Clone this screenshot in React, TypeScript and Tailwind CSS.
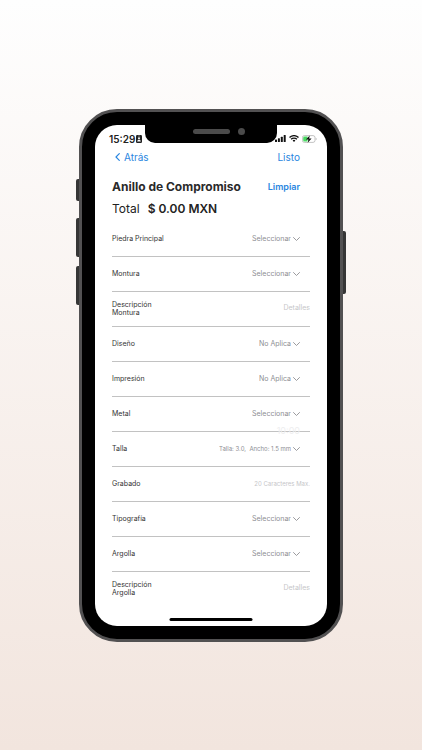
import React from "react";

type Field = {
  id: string;
  label: string[];
  kind: "select" | "text";
  value: string;
  small?: boolean;
};

const fields: Field[] = [
  { id: "piedra", label: ["Piedra Principal"], kind: "select", value: "Seleccionar" },
  { id: "montura", label: ["Montura"], kind: "select", value: "Seleccionar" },
  { id: "desc-montura", label: ["Descripción", "Montura"], kind: "text", value: "Detalles" },
  { id: "diseno", label: ["Diseño"], kind: "select", value: "No Aplica" },
  { id: "impresion", label: ["Impresión"], kind: "select", value: "No Aplica" },
  { id: "metal", label: ["Metal"], kind: "select", value: "Seleccionar" },
  { id: "talla", label: ["Talla"], kind: "select", value: "Talla: 3.0,\u00a0 Ancho: 1.5 mm", small: true },
  { id: "grabado", label: ["Grabado"], kind: "text", value: "20 Caracteres Max.", small: true },
  { id: "tipografia", label: ["Tipografía"], kind: "select", value: "Seleccionar" },
  { id: "argolla", label: ["Argolla"], kind: "select", value: "Seleccionar" },
  { id: "desc-argolla", label: ["Descripción", "Argolla"], kind: "text", value: "Detalles" },
];

function Row({ field }: { field: Field }) {
  const size = field.small ? "text-[6px]" : "text-[7px]";
  return (
    <div className="relative flex h-[35px] items-center justify-between border-b border-[#c2c2c2] last:border-transparent">
      <label htmlFor={field.id} className="shrink-0 text-[7px] leading-[8px] text-[#333]">
        {field.label.map((line) => (
          <span key={line} className="block">{line}</span>
        ))}
      </label>
      {field.kind === "select" ? (
        <div className="flex items-center gap-[2px] pr-[10px]">
          <select
            id={field.id}
            className={`${size} field-sizing-content h-[10px] appearance-none bg-transparent p-0 text-right leading-[10px] text-[#8e8e93] outline-none`}
          >
            <option>{field.value}</option>
          </select>
          <svg className="h-[4px] w-[7px]" viewBox="0 0 7 4" fill="none" stroke="#8e8e93" strokeWidth="0.9" strokeLinecap="round" strokeLinejoin="round" aria-hidden="true">
            <path d="M.5.5 3.5 3.5 6.5.5" />
          </svg>
        </div>
      ) : (
        <input
          id={field.id}
          placeholder={field.value}
          className={`${size} w-24 bg-transparent p-0 text-right outline-none placeholder:text-[#c6c6c9]`}
        />
      )}
      {field.id === "metal" && (
        <span className="absolute right-[10px] -bottom-[5px] text-[9px] leading-[10px] text-[#eeeeef]">10:00</span>
      )}
    </div>
  );
}

function StatusBar() {
  return (
    <div className="flex h-[21px] items-end justify-between pr-[10px] pl-[14px]">
      <div className="flex items-center gap-[1px]">
        <span className="text-[10px] leading-[14px] font-semibold text-[#222]">15:29</span>
        <svg className="h-[8px] w-[6px]" viewBox="0 0 6 8" aria-hidden="true">
          <rect width="6" height="8" rx="1.2" fill="#222" />
          <circle cx="3" cy="3.2" r="1" fill="#fff" />
          <path d="M1.2 6.6c0-2.5 3.6-2.5 3.6 0z" fill="#fff" />
          <path d="M2.2 1h1.6" stroke="#fff" strokeWidth=".5" />
        </svg>
      </div>
      <div className="relative z-20 flex h-[14px] items-center gap-[3px]">
        <svg className="h-[7px] w-[11px]" viewBox="0 0 11 7" fill="#111" aria-hidden="true">
          <rect x="0" y="4.5" width="2" height="2.5" rx=".5" />
          <rect x="2.9" y="3.2" width="2" height="3.8" rx=".5" />
          <rect x="5.8" y="1.7" width="2" height="5.3" rx=".5" />
          <rect x="8.7" y="0" width="2" height="7" rx=".5" />
        </svg>
        <svg className="h-[7px] w-[10px]" viewBox="0 0 10 7" fill="none" stroke="#111" strokeWidth="1.4" aria-hidden="true">
          <path d="M.5 2.5a6.4 6.4 0 0 1 9 0" />
          <path d="M2.1 4.3a4.1 4.1 0 0 1 5.8 0" />
          <path d="m5 7-1.4-1.5a2 2 0 0 1 2.8 0z" fill="#111" stroke="none" />
        </svg>
        <svg className="h-[8px] w-[15px]" viewBox="0 0 15 8" aria-hidden="true">
          <rect x=".4" y=".6" width="12.6" height="6.8" rx="2" fill="#fff" stroke="#aaa" strokeWidth=".7" />
          <path d="M2.6 1.4H5.5v5.2H2.6a1.4 1.4 0 0 1-1.4-1.4V2.8a1.4 1.4 0 0 1 1.4-1.4z" fill="#4cd964" />
          <path d="M7.8.4 3.9 4.5h2.5L5.7 7.7l3.9-4.2H7.1z" fill="#111" />
          <path d="M13.8 2.8c1 .5 1 1.9 0 2.4z" fill="#aaa" />
        </svg>
      </div>
    </div>
  );
}

export default function App() {
  return (
    <main className="flex min-h-screen items-center justify-center bg-linear-to-b from-[#fefefe] to-[#f2e5de] font-['Inter','Liberation_Sans',sans-serif]">
      <div className="relative w-[264px]">
        <span className="absolute top-[70px] -left-[3px] h-[22px] w-[5px] rounded-[2px] bg-[#363636]" />
        <span className="absolute top-[109px] -left-[3px] h-[39px] w-[5px] rounded-[2px] bg-[#363636]" />
        <span className="absolute top-[157px] -left-[3px] h-[39px] w-[5px] rounded-[2px] bg-[#363636]" />
        <span className="absolute top-[122px] -right-[3px] h-[63px] w-[5px] rounded-[2px] bg-[#363636]" />
        <div className="relative rounded-[38px] border-3 border-[#525152] bg-black p-[13px]">
          <div className="relative rounded-[22px] bg-white pb-[19px]">
            <div className="absolute top-0 left-1/2 z-10 flex h-[18px] w-[132px] -translate-x-1/2 justify-center rounded-b-[10px] bg-black">
              <span className="mt-[4px] h-[5px] w-[37px] rounded-full bg-[#4b4b4b]" />
              <span className="absolute top-[3px] right-[32px] size-[7px] rounded-full bg-[#4b4b4b]" />
            </div>
            <StatusBar />
            <div className="px-[17px]">
              <nav className="flex h-[23px] items-center justify-between pr-[10px] pl-[3px] text-[10px] leading-[14px] text-[#2a86e0]">
                <button type="button" className="flex items-center gap-[4px]">
                  <svg className="h-[8px] w-[5px]" viewBox="0 0 5 8" fill="none" stroke="currentColor" strokeWidth="1.2" strokeLinecap="round" strokeLinejoin="round" aria-hidden="true">
                    <path d="M4.3.7 1 4l3.3 3.3" />
                  </svg>
                  Atrás
                </button>
                <button type="button">Listo</button>
              </nav>
              <header className="pt-[10px] pr-[10px]">
                <div className="flex h-[16px] items-center justify-between">
                  <h1 className="text-[12px] leading-[16px] font-bold text-[#2a2a2a]">Anillo de Compromiso</h1>
                  <button type="button" className="text-[9px] leading-[12px] font-semibold text-[#2a86e0]">Limpiar</button>
                </div>
                <p className="mt-[6px] flex gap-[8px] text-[12px] leading-[16px] text-[#222]">
                  <span>Total</span>
                  <span className="font-semibold">$ 0.00 MXN</span>
                </p>
              </header>
              <form className="pt-[5px]">
                {fields.map((field) => (
                  <Row key={field.id} field={field} />
                ))}
              </form>
            </div>
            <div className="absolute bottom-[5px] left-1/2 h-[3px] w-[83px] -translate-x-1/2 rounded-full bg-black" />
          </div>
        </div>
      </div>
    </main>
  );
}
